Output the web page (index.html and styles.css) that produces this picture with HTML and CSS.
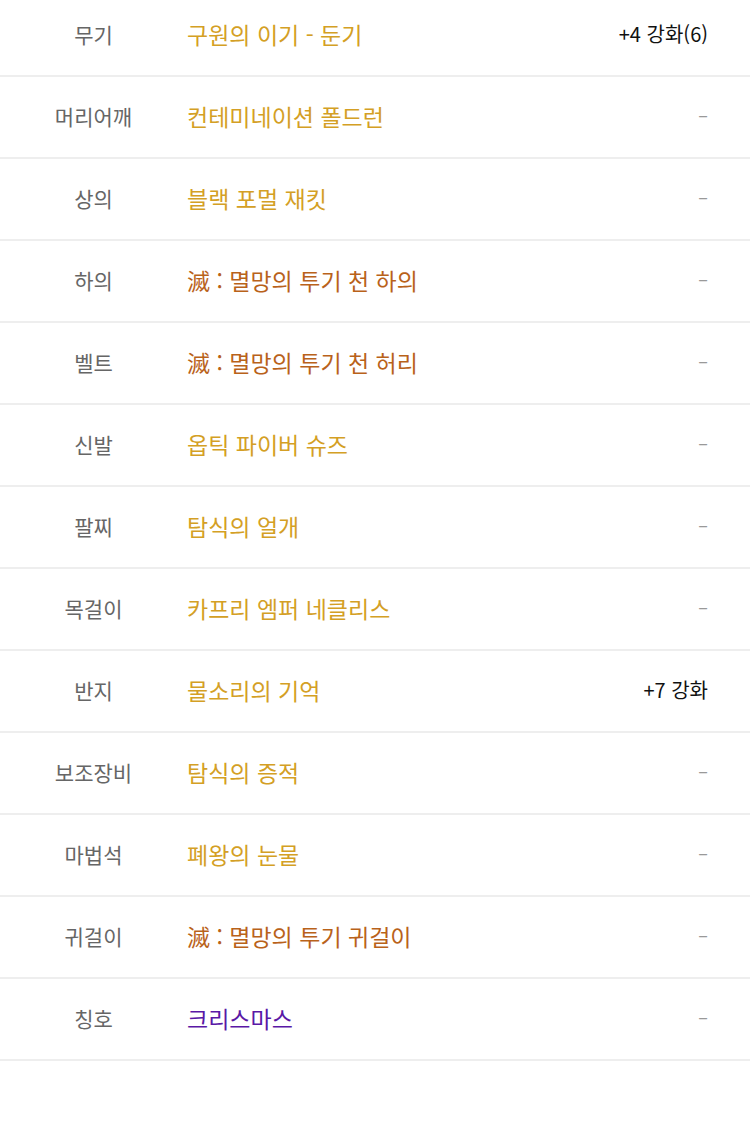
FILE: index.html
```html
<!DOCTYPE html>
<html lang="ko">
<head>
<meta charset="utf-8">
<link rel="stylesheet" href="styles.css">
</head>
<body>
<div class="list">
  <div class="row"><div class="label">무기</div><div class="name gold">구원의 이기 - 둔기</div><div class="extra strong">+4 강화(6)</div></div>
  <div class="row"><div class="label">머리어깨</div><div class="name gold">컨테미네이션 폴드런</div><div class="extra">–</div></div>
  <div class="row"><div class="label">상의</div><div class="name gold">블랙 포멀 재킷</div><div class="extra">–</div></div>
  <div class="row"><div class="label">하의</div><div class="name orange">滅 : 멸망의 투기 천 하의</div><div class="extra">–</div></div>
  <div class="row"><div class="label">벨트</div><div class="name orange">滅 : 멸망의 투기 천 허리</div><div class="extra">–</div></div>
  <div class="row"><div class="label">신발</div><div class="name gold">옵틱 파이버 슈즈</div><div class="extra">–</div></div>
  <div class="row"><div class="label">팔찌</div><div class="name gold">탐식의 얼개</div><div class="extra">–</div></div>
  <div class="row"><div class="label">목걸이</div><div class="name gold">카프리 엠퍼 네클리스</div><div class="extra">–</div></div>
  <div class="row"><div class="label">반지</div><div class="name gold">물소리의 기억</div><div class="extra strong">+7 강화</div></div>
  <div class="row"><div class="label">보조장비</div><div class="name gold">탐식의 증적</div><div class="extra">–</div></div>
  <div class="row"><div class="label">마법석</div><div class="name gold">폐왕의 눈물</div><div class="extra">–</div></div>
  <div class="row"><div class="label">귀걸이</div><div class="name orange">滅 : 멸망의 투기 귀걸이</div><div class="extra">–</div></div>
  <div class="row"><div class="label">칭호</div><div class="name purple">크리스마스</div><div class="extra">–</div></div>
</div>
</body>
</html>
```

FILE: styles.css
```css
html, body {
  margin: 0;
  padding: 0;
  background: #ffffff;
}
body {
  font-family: "Noto Sans CJK KR", "Noto Sans", sans-serif;
  overflow: hidden;
}
.list {
  margin-top: -5px;
}
.row {
  display: grid;
  grid-template-columns: 187px 1fr auto;
  align-items: center;
  height: 77px;
  padding-bottom: 3px;
  border-bottom: 2px solid #eeeeee;
  padding-right: 42px;
}
.label {
  text-align: center;
  font-size: 21px;
  color: #666666;
}
.name {
  font-size: 23px;
}
.gold { color: #d49f25; }
.orange { color: #b9621a; }
.purple { color: #5a18a6; }
.extra {
  font-size: 18px;
  color: #999999;
  text-align: right;
  padding-bottom: 4px;
}
.extra.strong {
  font-size: 20px;
  color: #111111;
  padding-bottom: 0;
}
```
